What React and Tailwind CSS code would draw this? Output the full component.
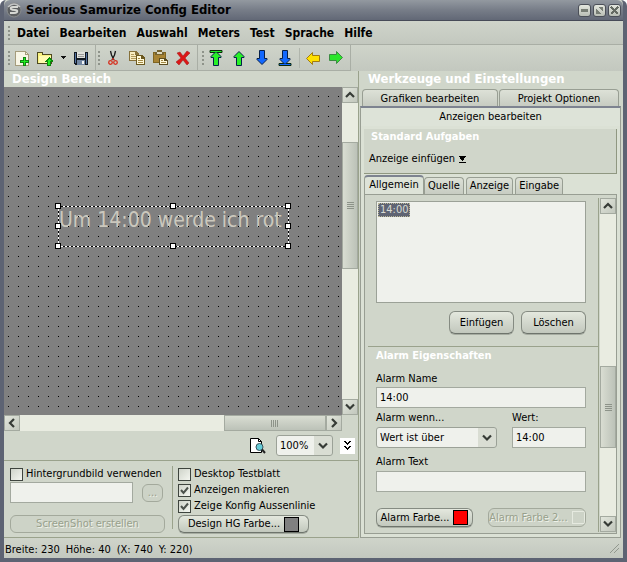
import { useState } from 'react';

const MENU = ['Datei', 'Bearbeiten', 'Auswahl', 'Meters', 'Test', 'Sprache', 'Hilfe'];
const METER_TABS = ['Allgemein', 'Quelle', 'Anzeige', 'Eingabe'];

function Icon({ children, size = 16 }) {
  return (
    <svg width={size} height={size} viewBox={`0 0 ${size} ${size}`} shapeRendering="crispEdges" aria-hidden="true">
      {children}
    </svg>
  );
}

function AppLogo() {
  return (
    <svg width="16" height="16" viewBox="0 0 16 16" aria-hidden="true">
      <circle cx="8" cy="8" r="7" fill="#5c5f61" stroke="#8a8d8e" />
      <path d="M2 5 Q8 -1 14 5" fill="none" stroke="#c3c5c5" strokeWidth="1.5" />
      <path d="M12 5 H7 Q4 5 5 7 Q6 8 9 8 Q12 8 11 10 Q10 11 8 11 H4" fill="none" stroke="#d6d8d4" strokeWidth="2" />
    </svg>
  );
}

function NewIcon() {
  return (
    <Icon>
      <path d="M1 1 H11 L14 4 V15 H1 Z" fill="#f8f6e6" stroke="#a59c7c" />
      <path d="M11 1 V4 H14" fill="none" stroke="#a59c7c" />
      <path d="M9 7 H12 V10 H15 V13 H12 V16 H9 V13 H6 V10 H9 Z" fill="#128512" />
      <path d="M10 8 H11 V11 H14 V12 H11 V15 H10 V12 H7 V11 H10 Z" fill="#20ef20" />
    </Icon>
  );
}

function OpenIcon() {
  return (
    <Icon>
      <path d="M0 2 H6 V4 H15 V14 H0 Z" fill="#4e4a20" />
      <path d="M1 3 H5 V5 H14 V13 H1 Z" fill="#f8f280" />
      <path d="M2 6 H14 V13 H2 Z" fill="#fffbb0" />
      <path d="M12 7 L16 11 V12 H14 V16 H10 V12 H8 V11 Z" fill="#0c860c" />
      <path d="M12 9 L14 11 H13 V15 H11 V11 H10 Z" fill="#20ef20" />
    </Icon>
  );
}

function SaveIcon() {
  return (
    <Icon>
      <path d="M1 2 H15 V15 H2 L1 14 Z" fill="#111820" />
      <path d="M2 3 H3 V13 H2 Z M13 3 H14 V14 H13 Z" fill="#5271a0" />
      <path d="M4 2 H12 V8 H4 Z" fill="#dfe1dc" />
      <path d="M5 4 H11 M5 6 H11" stroke="#999" />
      <path d="M4 10 H12 V15 H4 Z" fill="#7488a2" />
      <path d="M9 11 H11 V14 H9 Z" fill="#f2f4f4" />
    </Icon>
  );
}

function CutIcon() {
  return (
    <svg width="16" height="16" viewBox="0 0 16 16" aria-hidden="true">
      <path d="M5.500 1 L6.500 5 L9 10 M10.500 1 L9.500 5 L7 10" fill="none" stroke="#171717" strokeWidth="1.300" />
      <circle cx="5.500" cy="12.500" r="1.800" fill="none" stroke="#d5301f" strokeWidth="1.300" />
      <circle cx="10.500" cy="12.500" r="1.800" fill="none" stroke="#d5301f" strokeWidth="1.300" />
      <path d="M7 10 L8 8 L9 10" fill="none" stroke="#d5301f" />
    </svg>
  );
}

function CopyIcon() {
  return (
    <Icon>
      <path d="M0 1 H7 L10 4 V11 H0 Z" fill="#86713a" />
      <path d="M1 2 H6 V5 H9 V10 H1 Z" fill="#f7edc2" />
      <path d="M2 4.500 H5 M2 6.500 H7 M2 8.500 H7" stroke="#b29a5c" />
      <path d="M7 5 H13 L16 8 V15 H7 Z" fill="#6c5920" />
      <path d="M8 6 H12 V9 H15 V14 H8 Z" fill="#fff9d8" />
      <path d="M9 8.500 H11 M9 10.500 H14 M9 12.500 H14" stroke="#a28945" />
    </Icon>
  );
}

function PasteIcon() {
  return (
    <Icon>
      <path d="M1 2 H14 V13 H1 Z" fill="#806622" />
      <path d="M2 3 H13 V12 H2 Z" fill="#a88434" />
      <path d="M5 0 H10 V2 H12 V5 H3 V2 H5 Z" fill="#75632f" />
      <path d="M5 2 H10 V4 H5 Z" fill="#e0dbc2" />
      <path d="M7 8 H13 L16 11 V15 H7 Z" fill="#5d4e21" />
      <path d="M8 9 H12 V11 H15 V14 H8 Z" fill="#fff9d8" />
      <path d="M9 10.500 H11 M9 12.500 H14" stroke="#a28945" />
    </Icon>
  );
}

function DeleteIcon() {
  return (
    <svg width="16" height="16" viewBox="0 0 16 16" aria-hidden="true">
      <path d="M2 3 L5 2 L8 6 L12 1 L15 3 L10 8 L14 13 L12 15 L8 10 L4 15 L1 12 L6 8 Z" fill="#dc1717" stroke="#9c1717" strokeWidth="0.500" />
    </svg>
  );
}

function ArrowIcon({ down, bar }) {
  const fill = down ? '#1268ff' : '#27f027';
  return (
    <svg width="16" height="16" viewBox="0 0 16 16" aria-hidden="true">
      <g transform={down ? 'rotate(180 8 8)' : undefined}>
        {bar && <path d="M2 .5 H14 V2.500 H2 Z" fill={fill} stroke="#0a280a" />}
        <path d="M8 1.500 L13 6.500 V7.500 H10.500 V15.500 H5.500 V7.500 H3 V6.500 Z" fill={fill} stroke="#06204a" />
        {bar && <path d="M4 1.500 H12" stroke={fill} />}
      </g>
    </svg>
  );
}

function SideArrowIcon({ right }) {
  return (
    <svg width="16" height="16" viewBox="0 0 16 16" aria-hidden="true">
      <path
        transform={right ? 'rotate(180 8 8)' : undefined}
        d="M7.500 2.500 V5.500 H14.500 V11.500 H7.500 V14.500 L1.500 8.500 Z"
        fill={right ? '#2be52b' : '#ffe000'}
        stroke={right ? '#3c8b42' : '#a07a14'}
      />
    </svg>
  );
}

function Chevron({ dir = 'down' }) {
  const d = {
    down: 'M1 2.500 L5 6.500 L9 2.500',
    up: 'M1 7 L5 3 L9 7',
    left: 'M7 1 L3 5 L7 9',
    right: 'M3 1 L7 5 L3 9',
  }[dir];
  return (
    <svg width="10" height="10" viewBox="0 0 10 10" aria-hidden="true">
      <path d={d} fill="none" stroke="#363b36" strokeWidth="2.200" />
    </svg>
  );
}

function Grip() {
  return (
    <div className="mr-px ml-[2px] flex flex-col gap-[2px]">
      {[0, 1, 2, 3].map((i) => (
        <span key={i} className="h-[2px] w-[2px] bg-[#8e938a]" />
      ))}
    </div>
  );
}

function ToolButton({ label, children, className = 'w-6' }) {
  return (
    <button type="button" aria-label={label} className={`flex h-6 shrink-0 items-center justify-center ${className}`}>
      {children}
    </button>
  );
}

// before / thumb / after are relative lengths of the track parts
function ScrollBar({ horizontal, before, thumb, after }) {
  const button = 'flex h-4 w-4 shrink-0 items-center justify-center border border-[#a4aaa0] bg-linear-to-br from-[#e2e6dc] to-[#c2c7bd]';
  return (
    <div className={`flex shrink-0 bg-[#e9ece1] ${horizontal ? 'h-4' : 'w-4 flex-col'}`}>
      <button type="button" aria-label={horizontal ? 'Links' : 'Oben'} className={button}>
        <Chevron dir={horizontal ? 'left' : 'up'} />
      </button>
      <div className="basis-0" style={{ flexGrow: before }} />
      <div
        className={`flex basis-0 items-center justify-center gap-px border border-[#a4aaa0] ${horizontal ? 'bg-linear-to-b' : 'flex-col bg-linear-to-r'} from-[#d9ddd2] to-[#bcc2b8]`}
        style={{ flexGrow: thumb }}
      >
        {[0, 1, 2, 3].map((i) => (
          <span key={i} className={`bg-[#8d9389] ${horizontal ? 'h-[7px] w-px' : 'h-px w-[7px]'}`} />
        ))}
      </div>
      <div className="basis-0" style={{ flexGrow: after }} />
      <button type="button" aria-label={horizontal ? 'Rechts' : 'Unten'} className={button}>
        <Chevron dir={horizontal ? 'right' : 'down'} />
      </button>
    </div>
  );
}

function PushButton({ children, className = '', disabled }) {
  return (
    <button
      type="button"
      disabled={disabled}
      className={`flex items-center justify-center rounded-md border whitespace-nowrap ${
        disabled
          ? 'border-[#a3a99c] bg-[#cdd3c7] text-[#98a08c] [text-shadow:1px_1px_0_#eef1e8]'
          : 'border-[#858b82] border-b-[#6e746c] bg-linear-to-b from-[#e4e8de] to-[#c2c8bd] shadow-[0_1px_0_#a6aca1]'
      } ${className}`}
    >
      {children}
    </button>
  );
}

function CheckBox({ label, checked: initial = false }) {
  const [checked, setChecked] = useState(initial);
  return (
    <label className="flex h-4 items-center gap-[3px] whitespace-nowrap">
      <span className="relative h-[13px] w-[13px] shrink-0">
        <input
          type="checkbox"
          checked={checked}
          onChange={(e) => setChecked(e.target.checked)}
          className="block h-[13px] w-[13px] appearance-none border border-[#3e443e] bg-linear-to-br from-[#cfd4ca] to-[#f4f6f0]"
        />
        {checked && (
          <svg className="pointer-events-none absolute inset-0" width="13" height="13" viewBox="0 0 13 13" aria-hidden="true">
            <path d="M3 6 L5.500 9 L10 3.500" fill="none" stroke="#4d534d" strokeWidth="2" />
          </svg>
        )}
      </span>
      {label}
    </label>
  );
}

function DropDown({ id, label, value, className }) {
  return (
    <div className={`relative ${className}`}>
      <select
        id={id}
        aria-label={label}
        className="h-[21px] w-full appearance-none rounded-[3px] border border-[#9ba197] bg-[#eff1ec] bg-[linear-gradient(to_right,transparent_calc(100%-18px),#d9ddd3_calc(100%-18px))] pr-5 pl-[3px] outline-none"
      >
        <option>{value}</option>
      </select>
      <span className="pointer-events-none absolute top-[6px] right-[5px]">
        <Chevron />
      </span>
    </div>
  );
}

function TextField({ id, label, value = '', className = '', disabled }) {
  return (
    <input
      id={id}
      type="text"
      aria-label={label}
      defaultValue={value}
      disabled={disabled}
      className={`h-[21px] w-full border border-[#a3a99f] bg-[#eff1ec] px-[3px] outline-none ${className}`}
    />
  );
}

function TitleBar() {
  const button = 'flex h-[13px] w-[13px] items-center justify-center rounded-[3px] border border-[#4b4f58] bg-linear-to-b from-[#e4e7df] to-[#b9beb5]';
  return (
    <header className="flex h-[21px] shrink-0 items-center rounded-t-md border-b border-[#474b58] bg-linear-to-b from-[#9399a0] via-[#777d88] to-[#626876] pr-[2px] pl-[2px]">
      <AppLogo />
      <h1 className="ml-1 grow text-[13px] leading-4 font-bold whitespace-nowrap">Serious Samurize Config Editor</h1>
      <div className="flex gap-[2px]">
        <button type="button" aria-label="Minimieren" className={button}>
          <Icon size={9}><path d="M1 3 H8 V6 H1 Z" fill="#777d74" /></Icon>
        </button>
        <button type="button" aria-label="Maximieren" className={button}>
          <Icon size={9}><path d="M3 1 H8 V6 Z M1 3 L6 8 H1 Z" fill="#777d74" /></Icon>
        </button>
        <button type="button" aria-label="Schließen" className={button}>
          <Icon size={9}><path d="M1 1 L8 8 M8 1 L1 8" stroke="#656b63" strokeWidth="2" /></Icon>
        </button>
      </div>
    </header>
  );
}

function ToolBar() {
  const group = 'flex items-center border-r border-b border-[#a9aea5] pr-[2px]';
  return (
    <div className="flex h-[26px] shrink-0 bg-linear-to-b from-[#cfd4ca] to-[#c3c8bf]">
      <div className={`${group} pl-[2px]`}>
        <Grip />
        <ToolButton label="Neu" className="w-[22px]"><NewIcon /></ToolButton>
        <ToolButton label="Öffnen"><OpenIcon /></ToolButton>
        <ToolButton label="Zuletzt geöffnet" className="w-3">
          <Icon size={7}><path d="M1 2 H6 L3.500 5 Z" fill="#111" /></Icon>
        </ToolButton>
        <ToolButton label="Speichern"><SaveIcon /></ToolButton>
      </div>
      <div className={group}>
        <Grip />
        <ToolButton label="Ausschneiden"><CutIcon /></ToolButton>
        <ToolButton label="Kopieren"><CopyIcon /></ToolButton>
        <ToolButton label="Einfügen" className="w-[22px]"><PasteIcon /></ToolButton>
        <ToolButton label="Löschen"><DeleteIcon /></ToolButton>
      </div>
      <div className={`${group} pl-[2px]`}>
        <Grip />
        <ToolButton label="Ganz nach oben" className="w-[22px]"><ArrowIcon bar /></ToolButton>
        <ToolButton label="Nach oben"><ArrowIcon /></ToolButton>
        <ToolButton label="Nach unten" className="w-[22px]"><ArrowIcon down /></ToolButton>
        <ToolButton label="Ganz nach unten"><ArrowIcon down bar /></ToolButton>
        <div className="mx-[2px] h-5 w-px bg-[#b0b5ac]" />
        <ToolButton label="Zurück" className="w-[22px]"><SideArrowIcon /></ToolButton>
        <ToolButton label="Vor"><SideArrowIcon right /></ToolButton>
      </div>
    </div>
  );
}

const HANDLES = [
  'left-0 top-0',
  'left-1/2 top-0',
  'left-full top-0',
  'left-0 top-1/2',
  'left-full top-1/2',
  'left-0 top-full',
  'left-1/2 top-full',
  'left-full top-full',
];

function DesignCanvas() {
  return (
    <div className="relative min-h-[320px] grow overflow-hidden bg-[#808080]">
      <div className="absolute top-[119px] left-[54px] h-10 w-[230px]">
        <span className="block pl-px text-[21px] leading-7 whitespace-nowrap text-[#cbc8bd]">Um 14:00 werde ich rot</span>
      </div>
      <div className="absolute inset-0 bg-[conic-gradient(from_270deg_at_1px_1px,#000_25%,transparent_0)] bg-[length:10px_10px] bg-[position:4px_9px]" />
      <div className="absolute top-[119px] left-[54px] h-10 w-[230px]">
        <svg className="absolute inset-0" width="231" height="41" shapeRendering="crispEdges" aria-hidden="true">
          <rect x=".5" y=".5" width="230" height="40" fill="none" stroke="#000" />
          <rect x=".5" y=".5" width="230" height="40" fill="none" stroke="#fff" strokeDasharray="2 2" />
        </svg>
        {HANDLES.map((place) => (
          <span key={place} className={`absolute -mt-[3px] -ml-[3px] h-[6px] w-[6px] border border-black bg-white ${place}`} />
        ))}
      </div>
    </div>
  );
}

function DesignPanel() {
  return (
    <section className="flex min-w-0 grow flex-col border-r border-[#9aa28c]">
      <h2 className="h-4 shrink-0 pl-2 text-[13px] leading-4 font-bold text-white">Design Bereich</h2>
      <div className="flex grow">
        <DesignCanvas />
        <ScrollBar before={40} thumb={126} after={132} />
      </div>
      <div className="mr-4">
        <ScrollBar horizontal before={205} thumb={101} after={0} />
      </div>

      <div className="flex h-[29px] shrink-0 items-center justify-end gap-[7px] pr-[3px]">
        <button type="button" aria-label="Vorschau" className="mr-[3px]">
          <svg width="16" height="16" viewBox="0 0 16 16" aria-hidden="true">
            <path d="M.5 .5 H8.500 L11.500 3.500 V14.500 H.5 Z" fill="#fff" stroke="#000" />
            <path d="M8.500 .5 V3.500 H11.500" fill="none" stroke="#000" />
            <circle cx="9.500" cy="9" r="3.500" fill="#66ccd8" stroke="#35525a" />
            <path d="M12 11.500 L15 15" stroke="#222" strokeWidth="2" />
          </svg>
        </button>
        <DropDown label="Zoom" value="100%" className="w-[57px]" />
        <button type="button" aria-label="Mehr" className="flex h-4 w-[15px] items-center justify-center bg-white">
          <Icon size={9}><path d="M2 0 L4.500 3 L7 0 M2 5 L4.500 8 L7 5" fill="none" stroke="#000" strokeWidth="1.500" /></Icon>
        </button>
      </div>

      <div className="flex h-[78px] shrink-0 border-y border-[#9aa28c] px-[6px] pt-[5px]">
        <div className="flex w-[162px] flex-col">
          <CheckBox label="Hintergrundbild verwenden" />
          <div className="flex h-[21px] items-center gap-[9px]">
            <TextField label="Hintergrundbild" disabled className="max-w-[123px]" />
            <PushButton disabled className="h-[18px] w-[21px]">...</PushButton>
          </div>
          <PushButton disabled className="mt-3 h-[18px] w-[155px]">ScreenShot erstellen</PushButton>
        </div>
        <div className="mb-2 w-px bg-[#9aa28c]" />
        <div className="ml-[5px] flex flex-col">
          <CheckBox label="Desktop Testblatt" />
          <CheckBox label="Anzeigen makieren" checked />
          <CheckBox label="Zeige Konfig Aussenlinie" checked />
          <PushButton className="mt-px h-[18px] w-[131px] gap-1">
            Design HG Farbe...
            <span className="h-[15px] w-[15px] border border-black bg-[#808080]" />
          </PushButton>
        </div>
      </div>
    </section>
  );
}

function AlarmForm() {
  return (
    <div className="min-w-0 grow border-r border-[#9aa28c]">
      <div className="flex flex-col pt-[3px] pr-3 pl-2">
        <ul aria-label="Alarme" className="h-[102px] border border-[#9ba197] bg-[#eff1ec] p-px">
          <li className="h-[14px] w-8 border border-dotted border-[#b9b796] bg-[#5f6473] px-px text-center leading-3 text-[#d8dcd4]">14:00</li>
        </ul>
        <div className="mt-2 flex justify-end gap-[7px]">
          <PushButton className="h-[23px] w-[65px]">Einfügen</PushButton>
          <PushButton className="h-[23px] w-[65px]">Löschen</PushButton>
        </div>
      </div>

      <div className="mt-3 border-t border-[#9aa28c] pr-3 pl-2">
        <h3 className="text-[11px] leading-[18px] font-bold text-white">Alarm Eigenschaften</h3>
        <label htmlFor="alarm-name" className="mt-[5px] block leading-[17px]">Alarm Name</label>
        <TextField id="alarm-name" value="14:00" className="block" />
        <div className="flex justify-between">
          <div>
            <label htmlFor="alarm-when" className="block leading-[19px]">Alarm wenn...</label>
            <DropDown id="alarm-when" value="Wert ist über" className="w-[121px]" />
          </div>
          <div className="w-[74px]">
            <label htmlFor="alarm-value" className="block leading-[19px]">Wert:</label>
            <TextField id="alarm-value" value="14:00" className="block" />
          </div>
        </div>
        <label htmlFor="alarm-text" className="mt-[5px] block leading-[18px]">Alarm Text</label>
        <TextField id="alarm-text" className="block" />
        <div className="mt-4 flex justify-between">
          <PushButton className="h-[19px] w-[97px] gap-1">
            Alarm Farbe...
            <span className="h-[15px] w-[15px] border border-black bg-[#ff0000]" />
          </PushButton>
          <PushButton disabled className="h-[19px] w-[98px] gap-1 overflow-hidden">
            Alarm Farbe 2...
            <span className="h-[13px] w-[13px] shrink-0 border border-[#e6eae0]" />
          </PushButton>
        </div>
      </div>
    </div>
  );
}

function ToolsPanel() {
  const [tab, setTab] = useState('Allgemein');
  const backTab = 'h-[17px] rounded-t-[4px] border border-b-0 border-[#989e93] bg-linear-to-b from-[#dde1d7] to-[#c7ccc2] leading-[17px]';
  return (
    <section className="flex w-[264px] shrink-0 flex-col pr-[2px] pl-px">
      <h2 className="h-[18px] shrink-0 pl-2 text-[13px] leading-4 font-bold whitespace-nowrap text-white">Werkzeuge und Einstellungen</h2>
      <div role="tablist" className="flex shrink-0 flex-wrap">
        <div className="flex grow gap-px px-[2px]">
          <button type="button" role="tab" className={`w-[136px] ${backTab}`}>Grafiken bearbeiten</button>
          <button type="button" role="tab" className={`grow ${backTab}`}>Projekt Optionen</button>
        </div>
        <button type="button" role="tab" aria-selected="true" className="h-5 w-full border-x border-t-2 border-x-[#989e93] border-t-[#7d8390] bg-[#dde3d8] leading-4">
          Anzeigen bearbeiten
        </button>
      </div>

      <div className="flex grow flex-col border border-t-0 border-[#989e93] bg-[#dbe1d5] px-[3px] pt-[3px] pb-[3px]">
        <div className="h-[45px] border-r border-b border-[#8f9781] bg-[#d0d6ca] pl-[5px]">
          <h3 className="pl-[2px] text-[11px] leading-4 font-bold text-white">Standard Aufgaben</h3>
          <button type="button" className="mt-[6px] flex h-4 items-center gap-1">
            Anzeige einfügen
            <Icon size={7}><path d="M0 0 H7 L4 5 H3 Z M0 6 H7 V7 H0 Z" fill="#000" /></Icon>
          </button>
        </div>

        <div role="tablist" className="mt-px flex h-[19px] items-end">
          {METER_TABS.map((name) => (
            <button
              key={name}
              type="button"
              role="tab"
              aria-selected={tab === name}
              onClick={() => setTab(name)}
              className={`rounded-t-[4px] border border-b-0 border-[#989e93] whitespace-nowrap ${
                tab === name
                  ? 'h-[19px] w-[60px] border-t-2 border-t-[#7d8390] bg-[#dde3d8] pb-[2px]'
                  : 'mr-[2px] h-[17px] bg-linear-to-b from-[#dde1d7] to-[#c7ccc2] px-[3px]'
              }`}
            >
              {name}
            </button>
          ))}
        </div>
        <div className="flex grow border border-[#989e93] bg-[#d0d6ca] p-[3px] pr-0 pb-px">
          <AlarmForm />
          <div className="ml-px flex">
            <ScrollBar before={153} thumb={81} after={68} />
          </div>
        </div>
      </div>
    </section>
  );
}

export default function App() {
  return (
    <div className="flex min-h-screen flex-col rounded-t-md border-x-4 border-b-4 border-[#5d6373] bg-[#d0d6ca] font-[DejaVu_Sans_Condensed,DejaVu_Sans,sans-serif] text-[11px] leading-[14px] text-black">
      <TitleBar />
      <nav className="flex h-6 shrink-0 items-center border-b border-[#a9aea5] bg-linear-to-b from-[#cfd4ca] to-[#c3c8bf] pl-[2px]">
        <Grip />
        <div className="ml-[6px] flex gap-[10px]">
          {MENU.map((name) => (
            <button key={name} type="button" className="text-[12px] leading-4 font-bold">{name}</button>
          ))}
        </div>
      </nav>
      <ToolBar />
      <main className="flex grow">
        <DesignPanel />
        <ToolsPanel />
      </main>
      <footer className="flex h-5 shrink-0 items-center justify-between bg-linear-to-b from-[#cfd4ca] to-[#c3c8bf] pl-px">
        <span className="flex gap-[6px] pt-1 whitespace-nowrap">
          <span>Breite: 230</span>
          <span>Höhe: 40</span>
          <span>(X: 740</span>
          <span>Y: 220)</span>
        </span>
        <svg className="mr-1" width="9" height="9" viewBox="0 0 9 9" aria-hidden="true">
          <path d="M0 9 L9 0 M4 9 L9 4" stroke="#92988e" />
        </svg>
      </footer>
    </div>
  );
}
